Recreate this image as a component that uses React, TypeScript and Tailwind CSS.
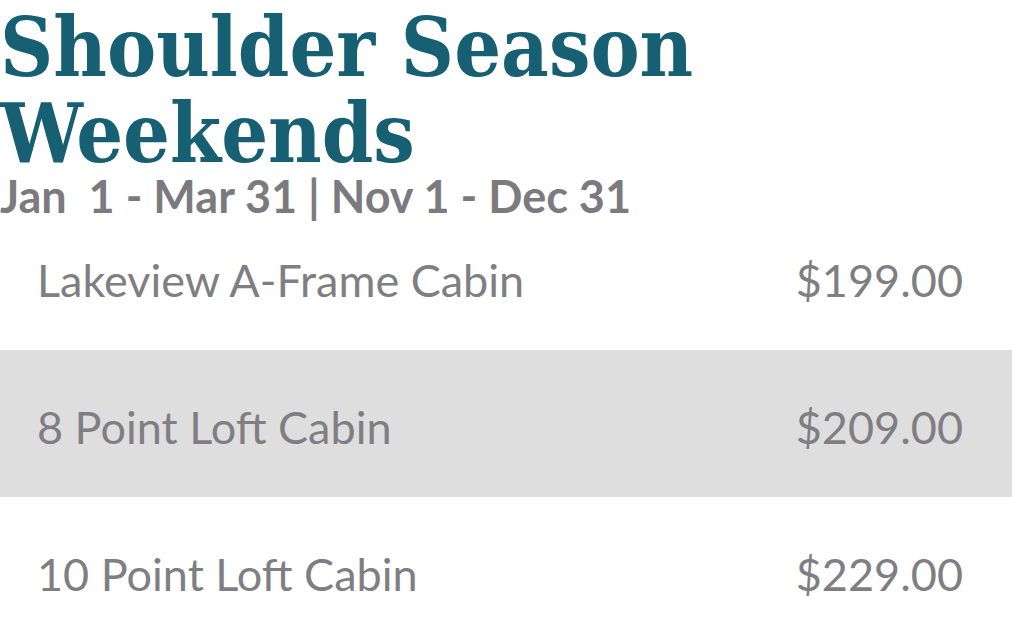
export default function App() {
  const rows = [
    { name: "Lakeview A-Frame Cabin", price: "$199.00", bg: "bg-white" },
    { name: "8 Point Loft Cabin", price: "$209.00", bg: "bg-[#dedede]" },
    { name: "10 Point Loft Cabin", price: "$229.00", bg: "bg-white" },
  ];
  return (
    <div className="w-[1012px] h-[644px] bg-white overflow-hidden">
      <div className="h-[203px]">
        <h1 className="text-[#175f73] font-bold text-[82px] leading-[86px] pt-[4px] whitespace-nowrap font-['DejaVu_Serif_Condensed','DejaVu_Serif',serif]">
          Shoulder Season
          <br />
          Weekends
        </h1>
        <div className="text-[#7b7b7f] font-bold text-[45px] leading-[40px] whitespace-pre font-[Lato,sans-serif]">
          {"Jan  1 - Mar 31 | Nov 1 - Dec 31"}
        </div>
      </div>
      {rows.map((r) => (
        <div
          key={r.name}
          className={`${r.bg} h-[147px] flex items-center justify-between pl-[37px] pr-[49px] pt-[8px] text-[#7f7f83] text-[45px] font-[Lato,sans-serif]`}
        >
          <span>{r.name}</span>
          <span>{r.price}</span>
        </div>
      ))}
    </div>
  );
}
